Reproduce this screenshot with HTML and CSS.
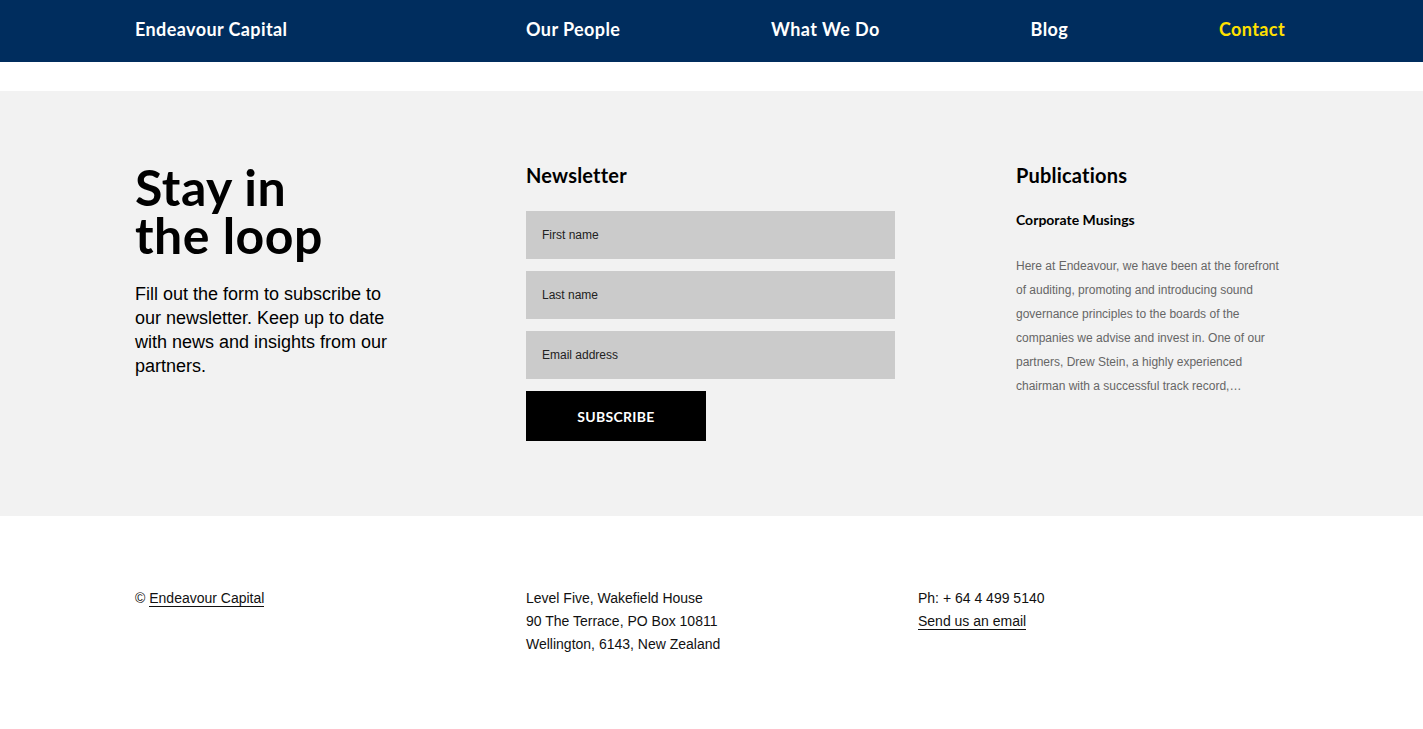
FILE: index.html
```html
<!DOCTYPE html>
<html lang="en">
<head>
    <meta charset="UTF-8">
    <title>Endeavour Capital - Contact</title>
    <link rel="stylesheet" href="styles.css">
</head>
<body>
    <header class="site-header">
        <div class="container header-inner">
            <a class="brand" href="#">Endeavour Capital</a>
            <nav class="main-nav">
                <a href="#">Our People</a>
                <a href="#">What We Do</a>
                <a href="#">Blog</a>
                <a href="#" class="active">Contact</a>
            </nav>
        </div>
    </header>

    <section class="signup">
        <div class="container signup-grid">
            <div class="intro">
                <h1>Stay in<br>the loop</h1>
                <p>Fill out the form to subscribe to our newsletter. Keep up to date with news and insights from our partners.</p>
            </div>

            <div class="newsletter">
                <h2>Newsletter</h2>
                <form class="signup-form">
                    <input type="text" placeholder="First name">
                    <input type="text" placeholder="Last name">
                    <input type="email" placeholder="Email address">
                    <button type="button">SUBSCRIBE</button>
                </form>
            </div>

            <div class="publications">
                <h2>Publications</h2>
                <h3>Corporate Musings</h3>
                <p>Here at Endeavour, we have been at the forefront of auditing, promoting and introducing sound governance principles to the boards of the companies we advise and invest in. One of our partners, Drew Stein, a highly experienced chairman with a successful track record,…</p>
            </div>
        </div>
    </section>

    <footer class="site-footer">
        <div class="container footer-grid">
            <div>© <a href="#">Endeavour Capital</a></div>
            <div>
                Level Five, Wakefield House<br>
                90 The Terrace, PO Box 10811<br>
                Wellington, 6143, New Zealand
            </div>
            <div>
                Ph: + 64 4 499 5140<br>
                <a href="#">Send us an email</a>
            </div>
        </div>
    </footer>
</body>
</html>
```

FILE: styles.css
```css
body {
    margin: 0;
    font-family: "Liberation Sans", Arial, sans-serif;
    color: #000;
    background: #fff;
}
.container {
    width: 1153px;
    box-sizing: border-box;
    padding-right: 3px;
    margin: 0 auto;
}
.site-header {
    background: #002d5e;
    height: 62px;
}
.header-inner {
    display: flex;
    align-items: center;
    height: 100%;
    padding-bottom: 5px;
    font-family: Lato, "Noto Sans", sans-serif;
    font-weight: 700;
    font-size: 18px;
    letter-spacing: 0.4px;
}
.header-inner a {
    color: #fff;
    text-decoration: none;
}
.brand {
    width: 391px;
}
.main-nav {
    flex: 1;
    display: flex;
    justify-content: space-between;
}
.main-nav a.active {
    color: #ffe000;
}
.signup {
    background: #f2f2f2;
    margin-top: 29px;
    padding: 70px 0 75px;
}
.signup-grid {
    display: grid;
    grid-template-columns: 391px 490px 1fr;
}
.intro h1 {
    font-family: Lato, "Noto Sans", sans-serif;
    font-weight: 700;
    font-size: 50px;
    line-height: 48px;
    letter-spacing: 0.5px;
    margin: 0;
    padding-top: 2px;
}
.intro p {
    width: 262px;
    font-size: 18px;
    line-height: 24px;
    margin: 23px 0 0;
}
.newsletter h2,
.publications h2 {
    font-family: Lato, "Noto Sans", sans-serif;
    font-weight: 700;
    font-size: 20px;
    line-height: 24px;
    letter-spacing: 0.2px;
    margin: 2px 0 0;
}
.signup-form {
    display: flex;
    flex-direction: column;
    gap: 12px;
    margin-top: 24px;
    width: 369px;
}
.signup-form input {
    height: 48px;
    border: none;
    background: #cbcbcb;
    padding: 0 16px;
    font-family: "Liberation Sans", Arial, sans-serif;
    font-size: 12px;
    color: #222;
    box-sizing: border-box;
}
.signup-form input::placeholder {
    color: #222;
}
.signup-form button {
    width: 180px;
    height: 50px;
    background: #000;
    color: #fff;
    border: none;
    font-family: Lato, "Noto Sans", sans-serif;
    font-weight: 700;
    font-size: 14px;
    letter-spacing: 0.3px;
}
.publications h3 {
    font-family: Lato, "Noto Sans", sans-serif;
    font-weight: 700;
    font-size: 14px;
    margin: 24px 0 0;
}
.publications p {
    font-size: 12px;
    line-height: 24px;
    color: #666;
    margin: 26px 0 0;
    width: 270px;
}
.site-footer {
    padding: 71px 0 80px;
    font-size: 14px;
    line-height: 23px;
    color: #111;
}
.footer-grid {
    display: grid;
    grid-template-columns: 391px 392px 1fr;
}
.site-footer a {
    color: #111;
    text-decoration: none;
    border-bottom: 1px solid #111;
}
```
